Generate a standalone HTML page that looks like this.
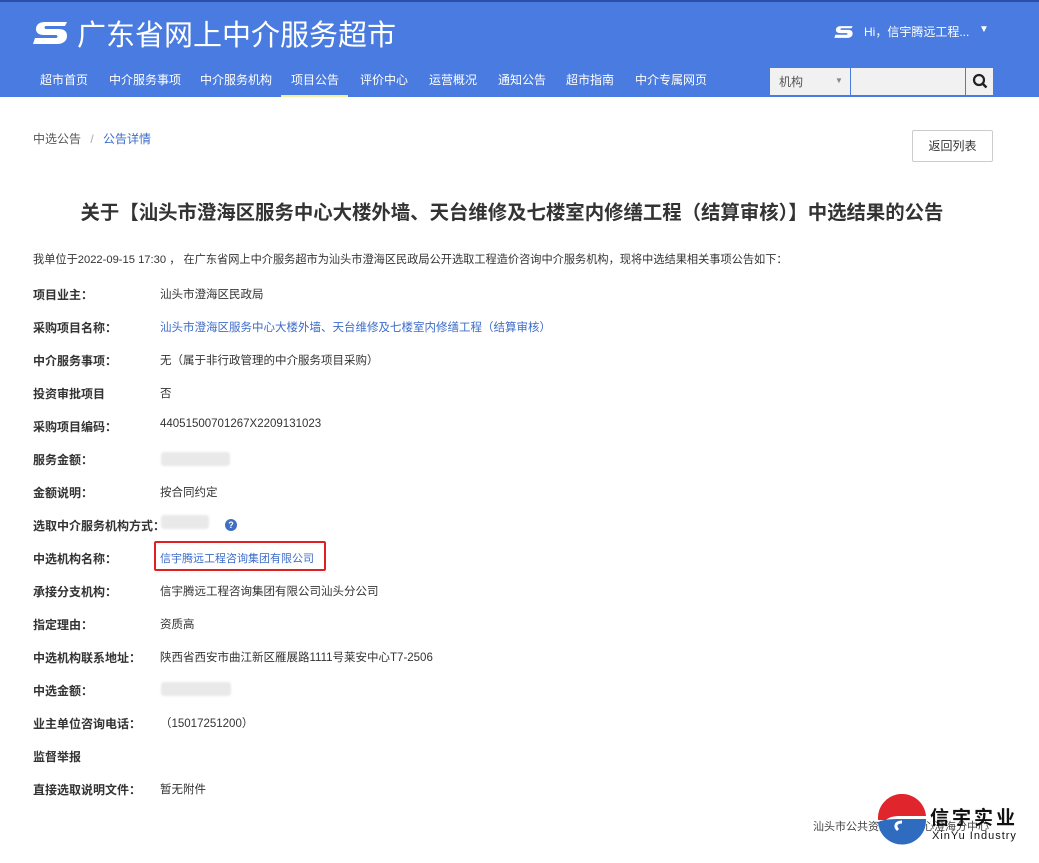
<!DOCTYPE html>
<html><head><meta charset="utf-8"><style>
body{margin:0;width:1039px;height:863px;background:#fff;font-family:"Liberation Sans","Noto Sans CJK SC",sans-serif;position:relative;overflow:hidden;color:#333}
.hd{position:absolute;left:0;top:0;width:1039px;height:97px;background:#4a7be0;border-top:2px solid #2a4fa8;box-sizing:border-box}
.a{position:absolute;white-space:nowrap}
.nav span{position:absolute;top:69px;font-size:12px;color:#fff}
.lbl{position:absolute;left:33px;font-size:12px;font-weight:bold;color:#333}
.val{position:absolute;left:160px;font-size:11.5px;color:#333}
.blue{color:#3d6cc9}
.blur{position:absolute;height:14px;background:#e9e9e9;border-radius:3px;filter:blur(1px)}
</style></head><body>
<div class="hd">
<svg class="a" style="left:33px;top:18px" width="36" height="26" viewBox="0 0 36 26"><path d="M34 2H12C6 2 3 5 3 9s3 6 8 6h12c2 0 2 3 0 3H2l-2 6h24c6 0 10-3 10-8s-3-7-9-7H13c-2 0-2-3 0-3h19z" fill="#fff"/></svg>
<div class="a" style="left:77px;top:10px;font-size:29px;color:#fff">广东省网上中介服务超市</div>
<svg class="a" style="left:834px;top:23px" width="20" height="14" viewBox="0 0 36 26"><path d="M34 2H12C6 2 3 5 3 9s3 6 8 6h12c2 0 2 3 0 3H2l-2 6h24c6 0 10-3 10-8s-3-7-9-7H13c-2 0-2-3 0-3h19z" fill="#fff"/></svg>
<div class="a" style="left:864px;top:21px;font-size:12px;color:#fff">Hi，信宇腾远工程...</div>
<div class="a" style="left:979px;top:22px;font-size:10px;color:#fff">▼</div>
<div class="nav">
<span style="left:40px">超市首页</span><span style="left:109px">中介服务事项</span><span style="left:200px">中介服务机构</span><span style="left:291px">项目公告</span><span style="left:360px">评价中心</span><span style="left:429px">运营概况</span><span style="left:498px">通知公告</span><span style="left:566px">超市指南</span><span style="left:635px">中介专属网页</span>
</div>
<div class="a" style="left:281px;top:93px;width:67px;height:2px;background:#f3f0a0"></div>
<div class="a" style="left:770px;top:66px;width:80px;height:27px;background:#f1f1f1"></div>
<div class="a" style="left:779px;top:71px;font-size:12px;color:#555">机构</div>
<div class="a" style="left:835px;top:74px;font-size:8px;color:#888">▼</div>
<div class="a" style="left:851px;top:66px;width:114px;height:27px;background:#f1f1f1"></div>
<div class="a" style="left:966px;top:66px;width:27px;height:27px;background:#f1f1f1"></div>
<svg class="a" style="left:971px;top:70px" width="18" height="18" viewBox="0 0 18 18"><circle cx="8" cy="8" r="5" fill="none" stroke="#222" stroke-width="2.2"/><path d="M11.5 11.5l4 4" stroke="#222" stroke-width="2.5"/></svg>
</div>
<div class="a" style="left:33px;top:130px;font-size:12px;color:#555">中选公告 <span style="color:#aaa;margin:0 6px">/</span> <span class="blue">公告详情</span></div>
<div class="a" style="left:912px;top:130px;width:79px;height:30px;border:1px solid #ccc;border-radius:2px;font-size:12px;color:#333;text-align:center;line-height:30px">返回列表</div>
<div class="a" style="left:0;width:1024px;text-align:center;top:196px;font-size:19.4px;font-weight:bold;color:#333">关于【汕头市澄海区服务中心大楼外墙、天台维修及七楼室内修缮工程（结算审核）】中选结果的公告</div>
<div class="a" style="left:33px;top:251px;font-size:11.2px;color:#333">我单位于2022-09-15 17:30 ， 在广东省网上中介服务超市为汕头市澄海区民政局公开选取工程造价咨询中介服务机构，现将中选结果相关事项公告如下：</div>
<div class="lbl" style="top:286px">项目业主：</div><div class="val" style="top:286px">汕头市澄海区民政局</div>
<div class="lbl" style="top:319px">采购项目名称：</div><div class="val blue" style="top:319px">汕头市澄海区服务中心大楼外墙、天台维修及七楼室内修缮工程（结算审核）</div>
<div class="lbl" style="top:352px">中介服务事项：</div><div class="val" style="top:352px">无（属于非行政管理的中介服务项目采购）</div>
<div class="lbl" style="top:385px">投资审批项目</div><div class="val" style="top:385px">否</div>
<div class="lbl" style="top:418px">采购项目编码：</div><div class="val" style="top:418px">44051500701267X2209131023</div>
<div class="lbl" style="top:451px">服务金额：</div><div class="blur" style="left:161px;top:452px;width:69px"></div>
<div class="lbl" style="top:484px">金额说明：</div><div class="val" style="top:484px">按合同约定</div>
<div class="lbl" style="top:517px">选取中介服务机构方式：</div><div class="blur" style="left:161px;top:515px;width:48px"></div>
<div class="a" style="left:225px;top:519px;width:12px;height:12px;border-radius:50%;background:#3f6fc0;color:#fff;font-size:9px;font-weight:bold;text-align:center;line-height:12px">?</div>
<div class="lbl" style="top:550px">中选机构名称：</div><div class="val blue" style="top:550px;font-size:11px">信宇腾远工程咨询集团有限公司</div>
<div class="a" style="left:154px;top:541px;width:172px;height:30px;border:2px solid #e02020;border-radius:2px;box-sizing:border-box"></div>
<div class="lbl" style="top:583px">承接分支机构：</div><div class="val" style="top:583px">信宇腾远工程咨询集团有限公司汕头分公司</div>
<div class="lbl" style="top:616px">指定理由：</div><div class="val" style="top:616px">资质高</div>
<div class="lbl" style="top:649px">中选机构联系地址：</div><div class="val" style="top:649px">陕西省西安市曲江新区雁展路1111号莱安中心T7-2506</div>
<div class="lbl" style="top:682px">中选金额：</div><div class="blur" style="left:161px;top:682px;width:70px"></div>
<div class="lbl" style="top:715px">业主单位咨询电话：</div><div class="val" style="top:715px">（15017251200）</div>
<div class="lbl" style="top:748px">监督举报</div>
<div class="lbl" style="top:781px">直接选取说明文件：</div><div class="val" style="top:781px">暂无附件</div>
<div class="a" style="left:813px;top:818px;font-size:11px;color:#444">汕头市公共资源交易中心澄海分中心</div>
<svg class="a" style="left:876px;top:794px" width="52" height="52" viewBox="0 0 52 52"><path d="M2 26A24 24 0 0 1 50 22H24c-8 0-12 2-14 4z" fill="#e0262c"/><path d="M2 28c4-2 10-3 22-3h26A24 24 0 0 1 2 28z" fill="#2f6cc0"/><path d="M26 28c-6 0-8 4-4 8" stroke="#fff" stroke-width="3" fill="none"/></svg>
<div class="a" style="left:930px;top:803px;font-size:19px;font-weight:bold;color:#111;letter-spacing:3px">信宇实业</div>
<div class="a" style="left:932px;top:830px;font-size:11px;color:#111;letter-spacing:1px">XinYu Industry</div>
</body></html>
